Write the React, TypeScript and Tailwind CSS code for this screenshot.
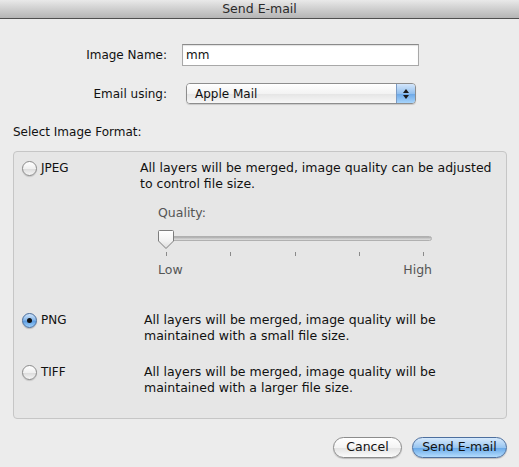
import React from "react";

const font = { fontFamily: '"DejaVu Sans", "Liberation Sans", sans-serif' };

function Radio({ checked }: { checked?: boolean }) {
  if (checked) {
    return (
      <div className="w-[15px] h-[15px] rounded-full border border-[#4a6d9c] bg-[linear-gradient(to_bottom,#cfe4fa_0%,#8ab9ea_45%,#5e9de0_55%,#9fd0fb_100%)] shadow-[0_1px_1px_rgba(0,0,0,0.2)] flex items-center justify-center shrink-0">
        <div className="w-[5px] h-[5px] rounded-full bg-[#111]" />
      </div>
    );
  }
  return (
    <div className="w-[15px] h-[15px] rounded-full border border-[#8a8a8a] bg-[linear-gradient(to_bottom,#ffffff_0%,#f0f0f0_50%,#dcdcdc_55%,#f6f6f6_100%)] shadow-[0_1px_1px_rgba(0,0,0,0.15)] shrink-0" />
  );
}

export default function App() {
  return (
    <div className="w-[519px] h-[467px] bg-[#ececec] text-[12px] text-[#111] flex flex-col overflow-hidden" style={font}>
      {/* Title bar */}
      <div className="h-[19px] shrink-0 border-b border-[#4f4f4f] bg-[linear-gradient(to_bottom,#e9e9e9,#c9c9c9_60%,#b5b5b5)] flex items-center justify-center text-[12.5px] text-[#2a2a2a]">
        Send E-mail
      </div>

      {/* Image name */}
      <div className="flex items-center mt-[25px] h-[22px]">
        <div className="w-[167px] text-right">Image Name:</div>
        <div className="ml-[15px] w-[237px] h-[22px] bg-white border border-[#a8a8a8] border-t-[#8a8a8a] shadow-[inset_0_1px_1px_rgba(0,0,0,0.12)] flex items-center pl-[3px]">
          mm
        </div>
      </div>

      {/* Email using */}
      <div className="flex items-center mt-[17px] h-[21px]">
        <div className="w-[167px] text-right">Email using:</div>
        <div className="ml-[19px] w-[230px] h-[21px] rounded-[4px] border border-[#8d8d8d] shadow-[0_1px_1px_rgba(0,0,0,0.15)] flex overflow-hidden">
          <div className="flex-1 bg-[linear-gradient(to_bottom,#ffffff,#f3f3f3_50%,#e6e6e6_55%,#f7f7f7)] flex items-center pl-[8px]">
            Apple Mail
          </div>
          <div className="w-[19px] border-l border-[#7b9bc4] bg-[linear-gradient(to_bottom,#d4e6fb,#93c0ee_50%,#6faae8_55%,#a7d4fb)] flex flex-col items-center justify-center gap-[2px]">
            <svg width="6" height="4" viewBox="0 0 6 4"><path d="M3 0 L6 4 L0 4 Z" fill="#1a1a1a" /></svg>
            <svg width="6" height="4" viewBox="0 0 6 4"><path d="M0 0 L6 0 L3 4 Z" fill="#1a1a1a" /></svg>
          </div>
        </div>
      </div>

      {/* Select image format */}
      <div className="mt-[20px] ml-[13px] leading-[16px]">Select Image Format:</div>

      {/* Group */}
      <div className="mt-[11px] ml-[13px] w-[494px] h-[268px] rounded-[4px] border border-[#c6c6c6] bg-[#e6e6e6] flex flex-col leading-[16px]">
        {/* JPEG */}
        <div className="flex mt-[8px]">
          <div className="w-[126px] flex items-center h-[16px] pl-[8px] gap-[4px]">
            <Radio />
            <span>JPEG</span>
          </div>
          <div className="w-[366px] text-[12.5px] whitespace-nowrap">
            All layers will be merged, image quality can be adjusted
            <br />
            to control file size.
          </div>
        </div>

        {/* Slider */}
        <div className="ml-[144px] w-[274px] mt-[13px] flex flex-col">
          <div className="text-[#555] text-[12.5px]">Quality:</div>
          <div className="relative h-[22px] mt-[9px]">
            <div className="absolute left-0 right-0 top-[6px] h-[5px] rounded-full bg-[linear-gradient(to_bottom,#a9a9a9,#cfcfcf_60%,#dcdcdc)] border border-[#b0b0b0]" />
            <svg className="absolute left-[-1px] top-[-1px]" width="18" height="21" viewBox="0 0 18 21">
              <defs>
                <linearGradient id="th" x1="0" y1="0" x2="0" y2="1">
                  <stop offset="0" stopColor="#ffffff" />
                  <stop offset="0.6" stopColor="#f1f1f1" />
                  <stop offset="1" stopColor="#dcdcdc" />
                </linearGradient>
              </defs>
              <path d="M2.5 1.5 H15.5 Q16.5 1.5 16.5 2.5 V12 L9 19.5 L1.5 12 V2.5 Q1.5 1.5 2.5 1.5 Z" fill="url(#th)" stroke="#7d7d7d" strokeWidth="1" />
            </svg>
          </div>
          <div className="flex justify-between px-[8px] h-[5px]">
            {[0, 1, 2, 3, 4].map((i) => (
              <div key={i} className="w-px h-[4px] bg-[#8a8a8a]" />
            ))}
          </div>
          <div className="flex justify-between mt-[5px] text-[#555] text-[12.5px]">
            <span>Low</span>
            <span>High</span>
          </div>
        </div>

        {/* PNG */}
        <div className="flex mt-[34px]">
          <div className="w-[130px] flex items-center h-[16px] pl-[8px] gap-[4px]">
            <Radio checked />
            <span>PNG</span>
          </div>
          <div className="w-[350px] text-[12.5px]">
            All layers will be merged, image quality will be
            <br />
            maintained with a small file size.
          </div>
        </div>

        {/* TIFF */}
        <div className="flex mt-[20px]">
          <div className="w-[130px] flex items-center h-[16px] pl-[8px] gap-[4px]">
            <Radio />
            <span>TIFF</span>
          </div>
          <div className="w-[350px] text-[12.5px]">
            All layers will be merged, image quality will be
            <br />
            maintained with a larger file size.
          </div>
        </div>
      </div>

      {/* Buttons */}
      <div className="flex justify-end gap-[10px] mt-[18px] mr-[12px]">
        <button className="w-[69px] h-[21px] rounded-full border border-[#8c8c8c] bg-[linear-gradient(to_bottom,#ffffff,#f4f4f4_50%,#e4e4e4_55%,#fbfbfb)] shadow-[0_1px_1px_rgba(0,0,0,0.2)] text-[12.5px] text-[#111] flex items-center justify-center" style={font}>
          Cancel
        </button>
        <button className="w-[95px] h-[21px] rounded-full border border-[#4d6f9e] bg-[linear-gradient(to_bottom,#d6e9fc,#99c6f1_50%,#6cabe9_55%,#b3dcfd)] shadow-[0_1px_1px_rgba(0,0,0,0.2)] text-[12.5px] text-[#111] flex items-center justify-center" style={font}>
          Send E-mail
        </button>
      </div>
    </div>
  );
}
